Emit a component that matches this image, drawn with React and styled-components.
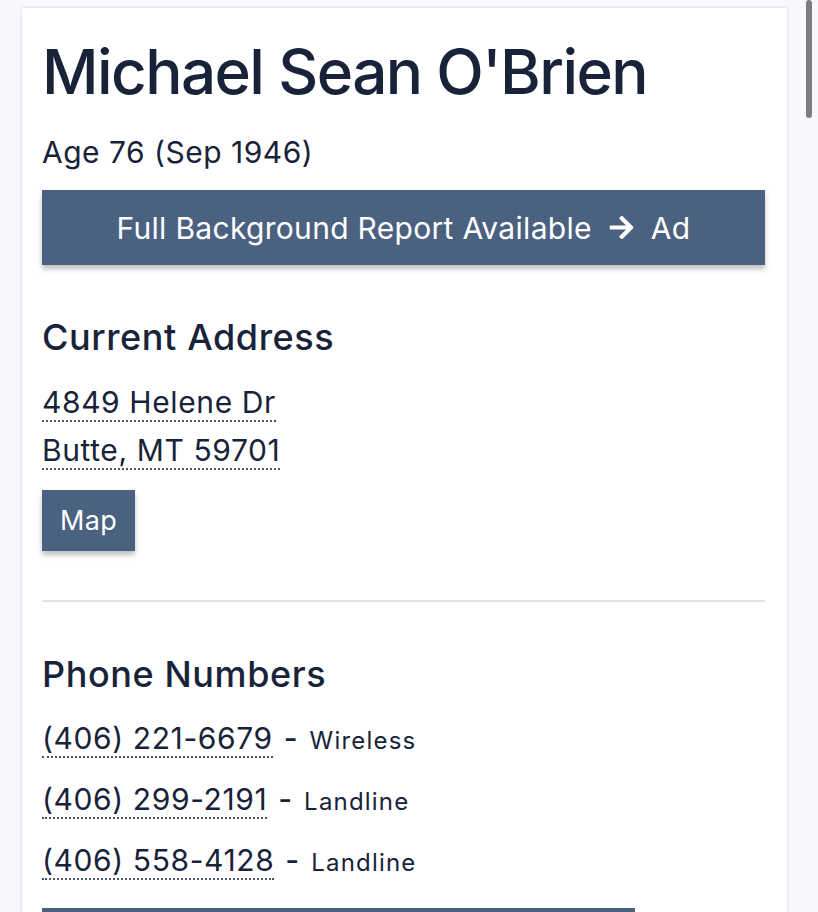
import React from 'react'
import styled, { createGlobalStyle } from 'styled-components'
import { FaArrowRight } from 'react-icons/fa'

const GlobalStyle = createGlobalStyle`
  html, body {
    margin: 0;
    padding: 0;
    background: #f7f8fc;
    font-family: Inter, "Noto Sans", "Liberation Sans", sans-serif;
    color: #18233a;
    overflow: hidden;
  }
`

const Page = styled.div`
  height: 912px;
  overflow: hidden;
  padding: 8px 0 0 22px;
  box-sizing: border-box;
`

const Card = styled.div`
  width: 765px;
  min-height: 904px;
  box-sizing: border-box;
  background: #fff;
  box-shadow: 0 0 3px rgba(0, 0, 0, 0.16);
  padding: 27px 22px 0 20px;
`

const Name = styled.h1`
  margin: 0;
  font-size: 62px;
  font-weight: 500;
  line-height: 74px;
  letter-spacing: -1.6px;
`

const Age = styled.div`
  margin-top: 25px;
  font-size: 30px;
  line-height: 36px;
  letter-spacing: 0.5px;
`

const ReportButton = styled.a`
  margin-top: 20px;
  height: 75px;
  display: flex;
  align-items: center;
  justify-content: center;
  gap: 16px;
  background: #4b6180;
  color: #fff;
  font-size: 30px;
  letter-spacing: 0.3px;
  box-shadow: 0 4px 5px rgba(0, 0, 0, 0.25);
  text-decoration: none;
`

const Section = styled.section`
  padding-top: ${p => p.$top}px;
`

const SectionTitle = styled.h2`
  margin: 0;
  font-size: 36px;
  font-weight: 500;
  line-height: 44px;
  letter-spacing: 0.6px;
`

const AddressList = styled.div`
  margin-top: 26px;
  display: flex;
  flex-direction: column;
  align-items: flex-start;
  gap: 11px;
`

const Dotted = styled.a`
  font-size: 30px;
  line-height: 35px;
  letter-spacing: 0.6px;
  color: #18233a;
  text-decoration: none;
  border-bottom: 2px dotted #4a5568;
`

const MapButton = styled.button`
  margin-top: 20px;
  height: 61px;
  padding: 0 18px;
  border: 0;
  background: #4b6180;
  color: #fff;
  font-family: inherit;
  font-size: 27px;
  letter-spacing: 0.4px;
  box-shadow: 0 4px 5px rgba(0, 0, 0, 0.25);
`

const Divider = styled.hr`
  margin: 49px 0 0;
  border: 0;
  height: 2px;
  background: #e4e4e4;
`

const PhoneList = styled.div`
  margin-top: 24px;
  display: flex;
  flex-direction: column;
  gap: 23px;
`

const PhoneRow = styled.div`
  display: flex;
  align-items: baseline;
`

const Dash = styled.span`
  margin: 0 12px 0 11px;
  font-size: 30px;
  font-weight: 500;
`

const PhoneType = styled.span`
  font-size: 24px;
  letter-spacing: 1.2px;
`

const BottomButton = styled.div`
  margin-top: 28px;
  width: 593px;
  height: 60px;
  background: #4b6180;
`

const Scrollbar = styled.div`
  position: fixed;
  top: 0;
  right: 6px;
  width: 6px;
  height: 118px;
  border-radius: 3px;
  background: #7d7d80;
`

const phones = [
  ['(406) 221-6679', 'Wireless'],
  ['(406) 299-2191', 'Landline'],
  ['(406) 558-4128', 'Landline']
]

export default function App() {
  return (
    <Page>
      <GlobalStyle />
      <Card>
        <Name>Michael Sean O'Brien</Name>
        <Age>Age 76 (Sep 1946)</Age>
        <ReportButton href='#'>
          <span>Full Background Report Available</span>
          <FaArrowRight size={27} />
          <span>Ad</span>
        </ReportButton>
        <Section $top={50}>
          <SectionTitle>Current Address</SectionTitle>
          <AddressList>
            <Dotted href='#'>4849 Helene Dr</Dotted>
            <Dotted href='#'>Butte, MT 59701</Dotted>
          </AddressList>
          <MapButton>Map</MapButton>
        </Section>
        <Divider />
        <Section $top={50}>
          <SectionTitle>Phone Numbers</SectionTitle>
          <PhoneList>
            {phones.map(([num, type]) => (
              <PhoneRow key={num}>
                <Dotted href='#'>{num}</Dotted>
                <Dash>-</Dash>
                <PhoneType>{type}</PhoneType>
              </PhoneRow>
            ))}
          </PhoneList>
          <BottomButton />
        </Section>
      </Card>
      <Scrollbar />
    </Page>
  )
}
